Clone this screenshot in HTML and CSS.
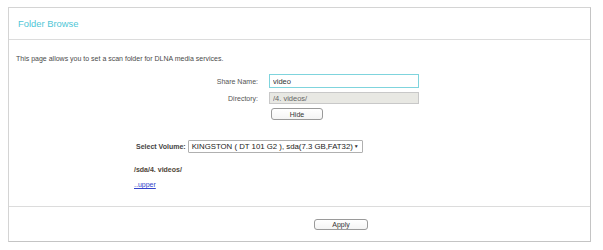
FILE: index.html
```html
<!DOCTYPE html>
<html lang="en">
<head>
    <meta charset="UTF-8">
    <title>Folder Browse</title>
    <link rel="stylesheet" href="styles.css">
</head>
<body>
    <div class="panel">
        <div class="panel-head">
            <h1>Folder Browse</h1>
        </div>

        <div class="panel-body">
            <p class="intro">This page allows you to set a scan folder for DLNA media services.</p>

            <div class="form-grid">
                <label class="label" for="share">Share Name:</label>
                <input class="text-input focused" id="share" type="text" value="video">

                <label class="label" for="dir">Directory:</label>
                <input class="text-input readonly" id="dir" type="text" value="/4. videos/" readonly>

                <span></span>
                <div class="btn-cell"><button class="btn btn-hide">Hide</button></div>
            </div>

            <div class="volume-row">
                <span class="volume-label">Select Volume:</span>
                <div class="select-box">
                    <span class="select-text">KINGSTON ( DT 101 G2 ), sda(7.3 GB,FAT32)</span>
                    <span class="select-arrow">&#9660;</span>
                </div>
            </div>

            <div class="path">/sda/4. videos/</div>
            <a class="upper" href="#">..upper</a>
        </div>

        <div class="panel-foot">
            <button class="btn btn-apply">Apply</button>
        </div>
    </div>
</body>
</html>
```

FILE: styles.css
```css
body {
    margin: 0;
    background: #fff;
    font-family: 'Liberation Sans', Arial, sans-serif;
    color: #555;
}
.panel {
    margin: 7px 11px 0 8px;
    width: 581px;
    height: 233px;
    border: 1px solid #d4d4d4;
    border-right-color: #c4c4c4;
    border-bottom-color: #c4c4c4;
    display: flex;
    flex-direction: column;
}
.panel-head {
    height: 31px;
    border-bottom: 1px solid #dcdcdc;
    display: flex;
    align-items: center;
    padding-left: 9px;
}
.panel-head h1 {
    margin: 0;
    font-size: 9.4px;
    font-weight: normal;
    color: #4fc6d6;
}
.panel-body {
    flex: 1;
    padding: 14px 0 0 7px;
    border-bottom: 1px solid #dcdcdc;
    line-height: 9px;
}
.intro {
    margin: 0;
    font-size: 7px;
    line-height: 9px;
    color: #4a4a4a;
}
.form-grid {
    display: grid;
    grid-template-columns: 242px 150px;
    column-gap: 11px;
    row-gap: 4px;
    margin-top: 11px;
    align-items: center;
}
.label {
    text-align: right;
    font-size: 7px;
    color: #555;
}
.text-input {
    box-sizing: border-box;
    width: 150px;
    height: 13px;
    padding: 0 3px;
    font-family: inherit;
    font-size: 7.5px;
    border: 1px solid #c8c8c8;
    color: #333;
    outline: none;
    margin: 0;
}
.text-input.focused {
    border-color: #7fd4dd;
    height: 14px;
}
.text-input.readonly {
    background: #e8e8e3;
    color: #666;
    height: 12px;
}
.btn-cell {
    display: flex;
}
.btn {
    font-family: inherit;
    font-size: 7px;
    color: #333;
    background: linear-gradient(#fff, #f4f4f4);
    border: 1px solid #9a9a9a;
    border-radius: 3px;
    padding: 0;
    cursor: pointer;
}
.btn-hide {
    width: 52px;
    height: 12px;
    margin: 0 0 0 2px;
}
.volume-row {
    display: flex;
    align-items: center;
    gap: 2px;
    margin: 20px 0 0 120px;
}
.volume-label {
    font-size: 7px;
    font-weight: bold;
    color: #444;
}
.select-box {
    box-sizing: border-box;
    width: 175px;
    height: 13px;
    border: 1px solid #b0b0b0;
    border-radius: 1px;
    display: flex;
    align-items: center;
    justify-content: space-between;
    padding: 0 3px 0 3px;
    background: #fff;
}
.select-text {
    font-size: 7.8px;
    color: #222;
    white-space: nowrap;
}
.select-arrow {
    font-size: 5px;
    color: #333;
}
.path {
    margin: 12px 0 0 118px;
    font-size: 7px;
    font-weight: bold;
    color: #4f4538;
}
.upper {
    display: inline-block;
    margin: 6px 0 0 118px;
    font-size: 7px;
    color: #3344cc;
}
.panel-foot {
    height: 34px;
    padding-left: 305px;
    display: flex;
    align-items: center;
}
.btn-apply {
    width: 54px;
    height: 11px;
}
```
